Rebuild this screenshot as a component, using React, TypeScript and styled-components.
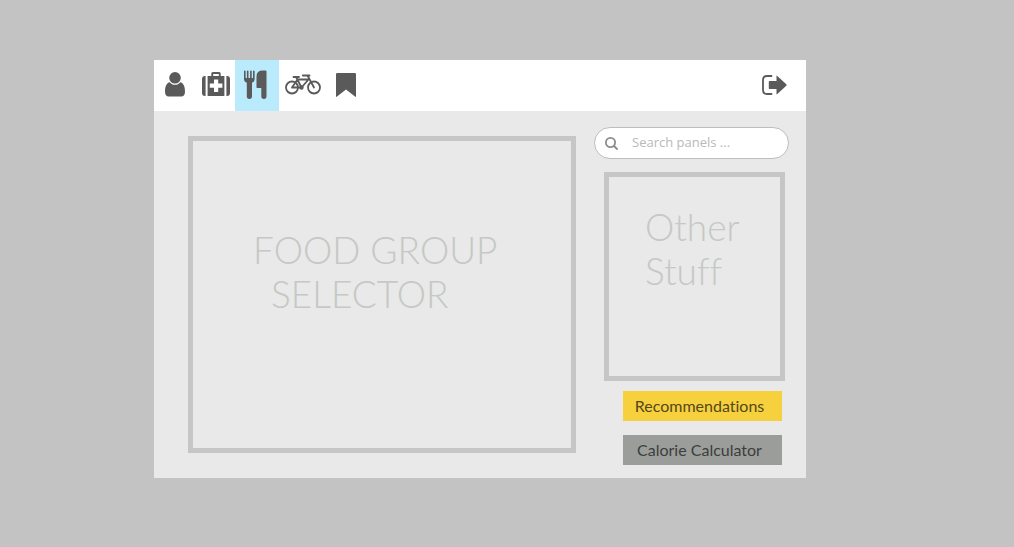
import React from "react";
import styled, { createGlobalStyle } from "styled-components";

const GlobalStyle = createGlobalStyle`
  *, *::before, *::after { box-sizing: border-box; }
  body {
    margin: 0;
    background: #c3c3c3;
    font-family: Lato, "Liberation Sans", sans-serif;
    font-variant-ligatures: none;
  }
`;

const Page = styled.div`
  min-height: 100vh;
  padding: 60px 208px 68px 154px;
`;

const Window = styled.div`
  background: #e9e9e9;
`;

const Header = styled.header`
  display: flex;
  justify-content: space-between;
  min-height: 51px;
  padding-right: 10px;
  background: #fff;
`;

const Nav = styled.nav`
  display: flex;
`;

const IconButton = styled.button<{ $width: number; $active?: boolean }>`
  display: flex;
  align-items: center;
  justify-content: center;
  width: ${(p) => p.$width}px;
  padding: 0 0 2px;
  border: 0;
  background: ${(p) => (p.$active ? "#b9ebfc" : "transparent")};
  color: #5a5a5a;
  cursor: pointer;

  svg {
    display: block;
    flex: none;
  }
`;

const Content = styled.div`
  display: flex;
  gap: 18px;
  padding: 16px 17px 13px 34px;
`;

const Main = styled.main`
  display: flex;
  flex: 1;
  padding: 9px 0 12px;
`;

const Panel = styled.section`
  flex: 1;
  border: 5px solid #c6c6c6;
  background: #e8e9e8;
`;

const SelectorPanel = styled(Panel)`
  padding: 87px 0 0 60px;
`;

const OtherPanel = styled(Panel)`
  min-height: 209px;
  margin: 13px 4px 10px 10px;
  padding: 28px 0 0 36px;
`;

const Title = styled.h2`
  margin: 0;
  color: #c5c8c5;
  font-size: 37px;
  font-weight: 300;
  line-height: 44px;
`;

const Line = styled.span<{ $indent?: boolean }>`
  display: block;
  padding-left: ${(p) => (p.$indent ? 18 : 0)}px;
  white-space: nowrap;
`;

const Aside = styled.aside`
  display: flex;
  flex-direction: column;
  width: 195px;
`;

const Search = styled.label`
  display: flex;
  align-items: center;
  gap: 14px;
  height: 32px;
  padding: 0 16px 0 10px;
  border: 1px solid #bdbdbd;
  border-radius: 16px;
  background: #fff;
  color: #8c8c8c;

  svg {
    flex: none;
  }
`;

const SearchInput = styled.input`
  flex: 1;
  min-width: 0;
  padding: 0 0 2px;
  border: 0;
  outline: 0;
  background: transparent;
  color: #666;
  font-family: "Open Sans", "Noto Sans", sans-serif;
  font-size: 13px;

  &::placeholder {
    color: #b9b9b9;
    opacity: 1;
  }
`;

const Actions = styled.div`
  display: flex;
  flex-direction: column;
  gap: 14px;
  margin: 0 7px 0 29px;
`;

const Action = styled.button<{ $tone: string; $ink: string }>`
  height: 30px;
  padding: 0 6px 0 0;
  border: 0;
  background: ${(p) => p.$tone};
  color: ${(p) => p.$ink};
  font-family: inherit;
  font-size: 16px;
  font-variant-ligatures: none;
  line-height: 20px;
  cursor: pointer;
`;

const UserIcon = () => (
  <svg width="20" height="25" viewBox="0 0 20 25" fill="currentColor" aria-hidden="true">
    <circle cx="10" cy="5.8" r="5.8" />
    <path d="M4.6 10.2C6 11.8 7.8 12.8 10 12.8s4-1 5.400-2.600C18.400 10.800 20 14.500 20 19.500c0 3.200-1.300 5-3.800 5H3.800C1.300 24.500 0 22.700 0 19.500c0-5 1.600-8.700 4.600-9.300z" />
  </svg>
);

const KitIcon = () => (
  <svg width="28" height="25" viewBox="0 0 28 25" fill="currentColor" aria-hidden="true">
    <path d="M3.600 4v20H3a3 3 0 0 1-3-3V7a3 3 0 0 1 3-3zM24.400 4v20h.6a3 3 0 0 0 3-3V7a3 3 0 0 0-3-3z" />
    <path
      fillRule="evenodd"
      d="M5.600 4h3.700V1.600Q9.300 0 10.900 0h6.200q1.600 0 1.600 1.600V4h3.700v20H5.600zM11.200 2v2h5.600V2zM12 7.500v4H7.800v4.300H12v4.100h4.200v-4.100h4.200v-4.300h-4.200v-4z"
    />
  </svg>
);

const CutleryIcon = () => (
  <svg width="26" height="29" viewBox="0 0 26 29" fill="currentColor" aria-hidden="true">
    <path d="M0 1.300a.8.800 0 0 1 1.600 0V8h1.300V1.300a.8.800 0 0 1 1.600 0V8h1.600V1.300a.8.800 0 0 1 1.600 0V8h1.300V1.300a.8.800 0 0 1 1.600 0V9.500q0 2.300-2.600 3.300V26.300a2.600 2.600 0 0 1-5.200 0V12.800Q0 11.800 0 9.500z" />
    <path d="M22.500 1.500V26.300a2.600 2.600 0 0 1-5.200 0V18h-4q-.8 0-.8-.8V6.500Q12.500.6 18.900.6h2.700q.9 0 .9.900z" />
  </svg>
);

const BikeIcon = () => (
  <svg
    width="36"
    height="21"
    viewBox="0 0 36 21"
    fill="none"
    stroke="currentColor"
    strokeWidth="1.800"
    strokeLinecap="round"
    strokeLinejoin="round"
    aria-hidden="true"
  >
    <circle cx="7" cy="13.500" r="6" />
    <circle cx="29" cy="13.500" r="6" />
    <path d="M7 13.500 12.500 5.500H23.500L16.500 13.500H7M16.500 13.500 11 3M8.500 3H14M29 13.500 22.500 1.500H17.800M22.500 1.500h2" />
    <circle cx="16.500" cy="13.500" r="1.300" />
  </svg>
);

const BookmarkIcon = () => (
  <svg width="20" height="24" viewBox="0 0 20 24" fill="currentColor" aria-hidden="true">
    <path d="M1.200 0h17.600Q20 0 20 1.200V23.200q0 1.200-1 .3L10 16.600 1 23.500q-1 .9-1-.3V1.200Q0 0 1.200 0z" />
  </svg>
);

const ExitIcon = () => (
  <svg width="25" height="20" viewBox="0 0 25 20" aria-hidden="true">
    <path
      d="M9.500 1H5Q1 1 1 5v10q0 4 4 4h4.500"
      fill="none"
      stroke="currentColor"
      strokeWidth="1.800"
      strokeLinecap="round"
    />
    <path
      d="M7.500 6h7V1.200q0-1 .8-.3l9 8.400q.7.700 0 1.400l-9 8.400q-.8.700-.8-.3V14h-7q-.7 0-.7-.7V6.700q0-.7.700-.7z"
      fill="currentColor"
    />
  </svg>
);

const SearchIcon = () => (
  <svg
    width="13"
    height="13"
    viewBox="0 0 13 13"
    fill="none"
    stroke="currentColor"
    strokeWidth="1.800"
    strokeLinecap="round"
    aria-hidden="true"
  >
    <circle cx="5.500" cy="5.500" r="4.600" />
    <path d="m9 9 3 3" />
  </svg>
);

const sections = [
  { label: "Profile", width: 42, Icon: UserIcon },
  { label: "Health", width: 39, Icon: KitIcon },
  { label: "Food", width: 44, Icon: CutleryIcon, active: true },
  { label: "Exercise", width: 48, Icon: BikeIcon },
  { label: "Bookmarks", width: 38, Icon: BookmarkIcon },
];

export default function App() {
  return (
    <>
      <GlobalStyle />
      <Page>
        <Window>
          <Header>
            <Nav aria-label="Sections">
              {sections.map(({ label, width, Icon, active }) => (
                <IconButton
                  key={label}
                  type="button"
                  aria-label={label}
                  aria-pressed={!!active}
                  $width={width}
                  $active={active}
                >
                  <Icon />
                </IconButton>
              ))}
            </Nav>
            <IconButton type="button" aria-label="Sign out" $width={44}>
              <ExitIcon />
            </IconButton>
          </Header>
          <Content>
            <Main>
              <SelectorPanel>
                <Title>
                  <Line>FOOD GROUP</Line>
                  <Line $indent>SELECTOR</Line>
                </Title>
              </SelectorPanel>
            </Main>
            <Aside>
              <Search>
                <SearchIcon />
                <SearchInput type="search" aria-label="Search panels" placeholder="Search panels ..." />
              </Search>
              <OtherPanel>
                <Title>
                  <Line>Other</Line>
                  <Line>Stuff</Line>
                </Title>
              </OtherPanel>
              <Actions>
                <Action type="button" $tone="#f7d13d" $ink="#54471c">
                  Recommendations
                </Action>
                <Action type="button" $tone="#9b9d9b" $ink="#3c3e3c">
                  Calorie Calculator
                </Action>
              </Actions>
            </Aside>
          </Content>
        </Window>
      </Page>
    </>
  );
}
